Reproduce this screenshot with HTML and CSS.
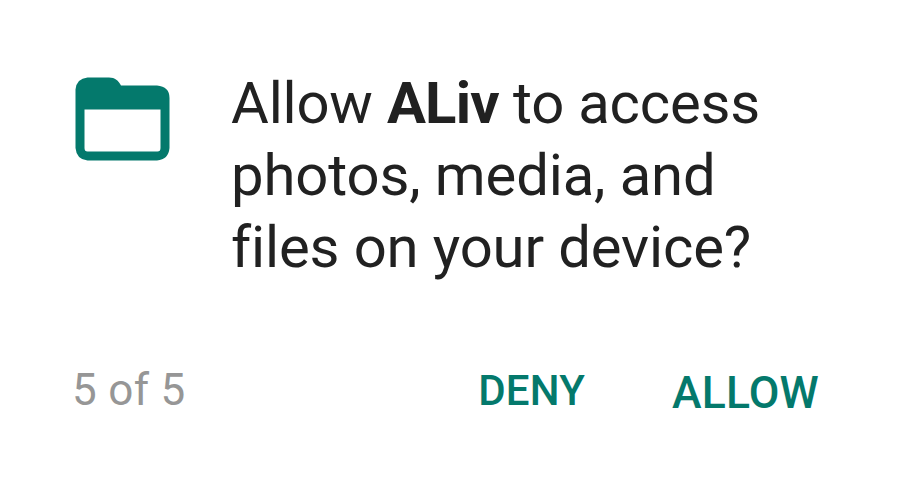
FILE: index.html
```html
<!DOCTYPE html>
<html lang="en">
<head>
<meta charset="utf-8">
<title>Permission request</title>
<link rel="stylesheet" href="styles.css">
</head>
<body>
<main class="dialog">
  <section class="request">
    <svg class="folder" viewBox="0 0 95 84" aria-hidden="true">
      <path fill="currentColor" fill-rule="evenodd" d="M12.5 .5H34C40 .5 43.500 3.500 46 8.500H82Q94.500 9.500 94.500 21V71Q93.500 82.500 82 83.500H12.500Q1.500 82.500 .5 71V12.500Q1.500 1.500 12.500 .5ZM9.500 32.500V71Q9.500 74.500 12.500 74.500H82.500Q85.500 74.500 85.500 71V32.500Z"/>
    </svg>
    <h1 class="message"><span class="line">Allow <b>ALiv</b> to access</span><span class="line">photos, media, and</span><span class="line">files on your device?</span></h1>
  </section>
  <footer class="footer">
    <span class="count">5 of 5</span>
    <button class="action deny">DENY</button>
    <button class="action allow">ALLOW</button>
  </footer>
</main>
</body>
</html>
```
FILE: styles.css
```css
* { box-sizing: border-box; }
body { margin: 0; background: #fff; font-family: Roboto, sans-serif; }
.dialog { width: 903px; height: 483px; padding: 67px 84px 0 72px; overflow: hidden; }
.request { display: flex; align-items: flex-start; }
.folder { width: 95px; height: 84px; margin: 10px 61px 0 3px; color: #04796c; flex: none; }
.message { margin: 0; font-size: 58px; line-height: 72px; font-weight: 400; color: #212121; letter-spacing: -0.13px; white-space: nowrap; }
.line { display: block; }
.line:first-child { letter-spacing: -0.2px; }
.message b { font-weight: 700; letter-spacing: -0.8px; }
.footer { display: flex; margin-top: 77px; line-height: 60px; white-space: nowrap; }
.count { font-size: 44px; letter-spacing: 0.3px; color: #969696; margin-right: auto; }
.action { height: 60px; border: 0; padding: 0; background: none; font: 500 42px/60px Roboto, sans-serif; color: #04796c; }
.deny { margin-top: 1px; letter-spacing: 0.2px; }
.allow { margin: 3px 0 0 87px; font-size: 44.5px; letter-spacing: 0.2px; }
```
